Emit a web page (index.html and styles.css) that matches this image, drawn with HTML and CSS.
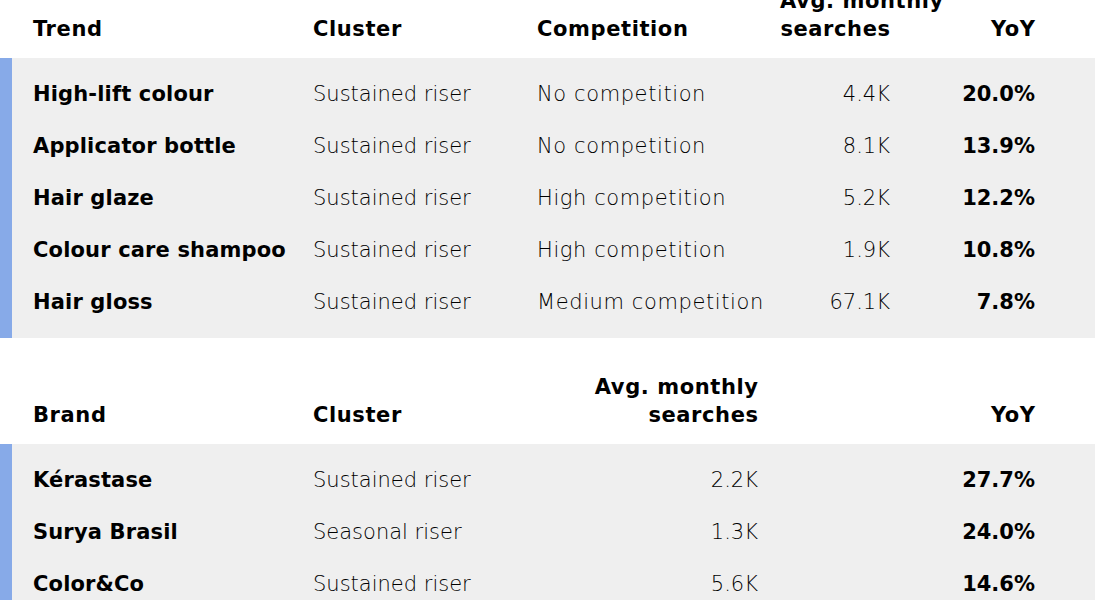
FILE: index.html
```html
<!DOCTYPE html>
<html lang="en">
<head>
<meta charset="utf-8">
<title>Trends</title>
<link rel="stylesheet" href="styles.css">
</head>
<body>
<main class="page">
  <section class="table table--trend">
    <div class="thead">
      <div class="th">Trend</div>
      <div class="th">Cluster</div>
      <div class="th">Competition</div>
      <div class="th num">Avg. monthly<br>searches</div>
      <div class="th num">YoY</div>
    </div>
    <div class="tbody">
      <div class="tr">
        <div class="td name">High-lift colour</div>
        <div class="td">Sustained riser</div>
        <div class="td wide">No competition</div>
        <div class="td num">4.4K</div>
        <div class="td num strong">20.0%</div>
      </div>
      <div class="tr">
        <div class="td name">Applicator bottle</div>
        <div class="td">Sustained riser</div>
        <div class="td wide">No competition</div>
        <div class="td num">8.1K</div>
        <div class="td num strong">13.9%</div>
      </div>
      <div class="tr">
        <div class="td name">Hair glaze</div>
        <div class="td">Sustained riser</div>
        <div class="td wide">High competition</div>
        <div class="td num">5.2K</div>
        <div class="td num strong">12.2%</div>
      </div>
      <div class="tr">
        <div class="td name">Colour care shampoo</div>
        <div class="td">Sustained riser</div>
        <div class="td wide">High competition</div>
        <div class="td num">1.9K</div>
        <div class="td num strong">10.8%</div>
      </div>
      <div class="tr">
        <div class="td name">Hair gloss</div>
        <div class="td">Sustained riser</div>
        <div class="td wide">Medium competition</div>
        <div class="td num">67.1K</div>
        <div class="td num strong">7.8%</div>
      </div>
    </div>
  </section>

  <section class="table table--brand">
    <div class="thead">
      <div class="th">Brand</div>
      <div class="th">Cluster</div>
      <div class="th num">Avg. monthly<br>searches</div>
      <div class="th num">YoY</div>
    </div>
    <div class="tbody">
      <div class="tr">
        <div class="td name">Kérastase</div>
        <div class="td">Sustained riser</div>
        <div class="td num">2.2K</div>
        <div class="td num strong">27.7%</div>
      </div>
      <div class="tr">
        <div class="td name">Surya Brasil</div>
        <div class="td">Seasonal riser</div>
        <div class="td num">1.3K</div>
        <div class="td num strong">24.0%</div>
      </div>
      <div class="tr">
        <div class="td name">Color&amp;Co</div>
        <div class="td">Sustained riser</div>
        <div class="td num">5.6K</div>
        <div class="td num strong">14.6%</div>
      </div>
    </div>
  </section>
</main>
</body>
</html>
```

FILE: styles.css
```css
* { box-sizing: border-box; }

html, body {
  margin: 0;
  padding: 0;
  background: #ffffff;
}

body {
  font-family: "DejaVu Sans", "Liberation Sans", sans-serif;
  font-size: 21px;
  color: #000000;
  overflow: hidden;
}

.page {
  margin-top: -13px;
}

.table + .table {
  margin-top: 35px;
}

.thead,
.tr {
  display: grid;
  align-items: end;
  padding-right: 60px;
}

.table--trend .thead,
.table--trend .tr {
  grid-template-columns: 280px 224px 243px 110px 145px;
}

.table--brand .thead,
.table--brand .tr {
  grid-template-columns: 280px 225px 220px 1fr;
}

.thead {
  padding-left: 33px;
  padding-bottom: 15px;
}

.th {
  font-weight: 700;
  line-height: 28px;
  letter-spacing: 0.6px;
  white-space: nowrap;
}

.th.num {
  margin-right: -0.6px;
}

.tbody {
  background: #efefef;
  border-left: 12px solid #87aae8;
  padding: 10px 60px 10px 21px;
}

.tbody .tr {
  padding-right: 0;
}

.td {
  line-height: 52px;
  font-weight: 300;
  white-space: nowrap;
}

.td.wide {
  letter-spacing: 0.6px;
}

.td.name,
.td.strong {
  font-weight: 700;
}

.td.name {
  letter-spacing: 0.15px;
}

.num {
  text-align: right;
}
```
